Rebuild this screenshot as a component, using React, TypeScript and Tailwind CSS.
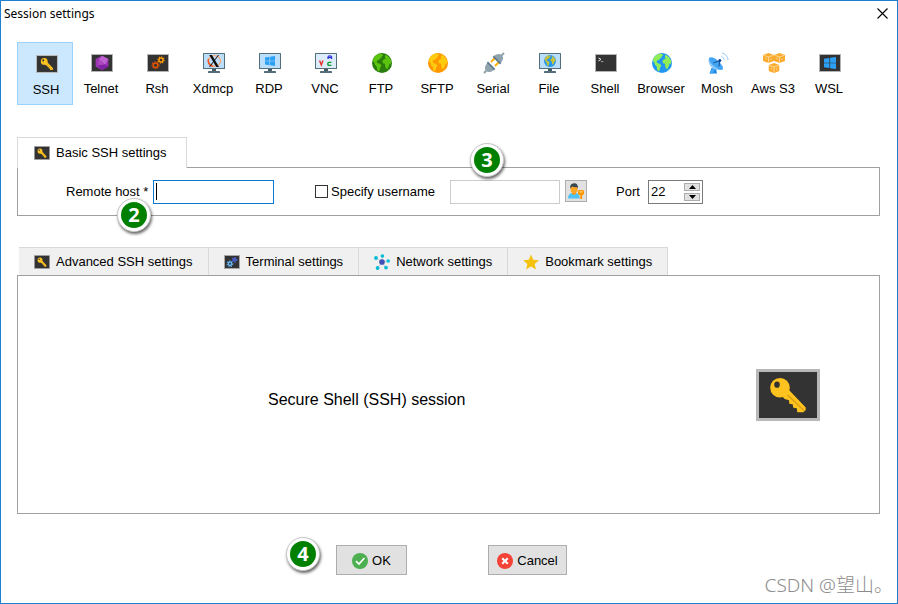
import { useState, useCallback } from 'react';
import type { ReactNode } from 'react';

/* ---------- icons ---------- */

const KeyIcon = ({ className }: { className?: string }) => (
  <svg viewBox="0 0 64 52" preserveAspectRatio="none" className={className}>
    <rect width="64" height="52" fill="#b8b8b8" />
    <rect x="3" y="3" width="58" height="46" fill="#333333" />
    <path
      d="M33 21 L49.7 38.5 V41 L47.3 43.3 H41.3 L40.8 39.3 L37.3 38.7 L36.7 35.3 L33.3 34.7 L33 31.3 L28.7 30 L26 27 Z"
      fill="#ffc31f"
    />
    <circle cx="24" cy="18.7" r="9.8" fill="#ffc31f" />
    <path d="M31.5 26 L48 41.5" stroke="#dba012" strokeWidth="1.6" />
    <ellipse cx="21" cy="15.7" rx="2.8" ry="3.1" fill="#333333" />
  </svg>
);

const DarkBox = ({ children }: { children: ReactNode }) => (
  <svg viewBox="0 0 22 18" className="h-[18px] w-[22px]">
    <rect width="22" height="18" fill="#b4b4b4" />
    <rect x="1" y="1" width="20" height="16" fill="#333333" />
    {children}
  </svg>
);

const Monitor = ({ children }: { children: ReactNode }) => (
  <svg viewBox="0 0 22 20" className="h-5 w-[22px]">
    <rect width="22" height="16" rx="0.5" fill="#546e7a" />
    <rect x="1" y="1" width="20" height="14" fill="#bbdefb" />
    <rect x="9" y="16" width="4" height="2" fill="#455a64" />
    <rect x="5" y="18" width="12" height="2" rx="0.5" fill="#546e7a" />
    {children}
  </svg>
);

const Gear = ({ cx, cy, r, color }: { cx: number; cy: number; r: number; color: string }) => (
  <g stroke={color} fill="none">
    <circle cx={cx} cy={cy} r={r} strokeWidth="1.5" />
    <circle cx={cx} cy={cy} r={r + 1.1} strokeWidth="1.1" strokeDasharray="1.2 1.2" />
  </g>
);

const GlobeShape = ({ sea, land }: { sea: string; land: string }) => (
  <>
    <circle cx="10" cy="10" r="10" fill={sea} />
    <path
      d="M3.2 3 C4.5 1.7 6 0.9 7.6 0.4 L10.6 1.2 L11 2.6 L9.4 3.4 L9.8 4.8 L8.2 5.2 L7 7 L5.4 7.2 L4.6 9 L6 10.2 L8.2 11 L9.4 12.8 L8.2 14.6 L7.6 17 L6.6 18.6 L5.2 17 L4.8 13.8 L3 11.8 L2.2 9.2 L0.8 8 C1 6.2 1.8 4.4 3.2 3 Z"
      fill={land}
    />
    <path
      d="M13.4 1.8 C16.4 3 18.8 5.8 19.4 9 L18.6 11.2 L17.4 10.4 L17 12.8 L15.6 15.4 L14 15.8 L13.2 13.2 L13 10.8 L11 10.2 L10.4 8 L12 6.2 L13.8 5.8 L12.8 4.2 Z"
      fill={land}
    />
    <path d="M15.4 17 L17.4 15.4 L16.4 17.4 Z" fill={land} />
  </>
);

const Globe = ({ sea, land }: { sea: string; land: string }) => (
  <svg viewBox="0 0 20 20" className="h-5 w-5">
    <GlobeShape sea={sea} land={land} />
  </svg>
);

const WindowsLogo = ({ x, y, size }: { x: number; y: number; size: number }) => (
  <svg x={x} y={y} width={size} height={size} viewBox="0 0 10 10">
    <path
      d="M0 1.4 L4.5 0.8 V4.7 H0 Z M5.1 0.7 L10 0 V4.7 H5.1 Z M0 5.3 H4.5 V9.2 L0 8.6 Z M5.1 5.3 H10 V10 L5.1 9.3 Z"
      fill="#2ba0f5"
    />
  </svg>
);

const TelnetIcon = () => (
  <DarkBox>
    <path d="M11 1.8 L17.4 5 V12.4 L11 16.2 L4.6 12.4 V5 Z" fill="#9c34b4" />
    <path d="M11 1.8 L17.4 5 L14 10.6 L8 5.4 Z" fill="#bd62d0" />
    <path d="M8 5.4 L14 10.6 L6.6 11.6 Z" fill="#ab47bc" />
    <path d="M14 10.6 L17.4 12.4 L11 16.2 L6.6 11.6 Z" fill="#7f22a4" />
  </DarkBox>
);

const RshIcon = () => (
  <DarkBox>
    <Gear cx={8.5} cy={11.3} r={2.3} color="#e65100" />
    <Gear cx={14} cy={6} r={2} color="#ff9800" />
  </DarkBox>
);

const XdmcpIcon = () => (
  <Monitor>
    <ellipse cx="11.4" cy="8" rx="6.2" ry="5.4" fill="none" stroke="#ffab70" strokeWidth="1.3" />
    <path d="M5.6 6 A6 5.4 0 0 0 10 13.2" fill="none" stroke="#f4511e" strokeWidth="1.6" />
    <path d="M6.2 2 H9 L16 14 H13.2 Z" fill="#111111" />
    <path d="M15 2 H16 L7 14 H6 Z" fill="#111111" />
  </Monitor>
);

const RdpIcon = () => (
  <Monitor>
    <WindowsLogo x={6} y={3} size={10} />
  </Monitor>
);

const VncIcon = () => (
  <Monitor>
    <rect x="1" y="1" width="20" height="14" fill="#dcecfa" />
    <path d="M4.6 7.6 L6.3 12 L8 7.6" fill="none" stroke="#e53935" strokeWidth="1.5" />
    <path d="M13 6 V4 Q13 2.8 14.8 2.8 Q16.6 2.8 16.6 4 V6 M13 4.7 H16.6" fill="none" stroke="#3030d8" strokeWidth="1.2" />
    <path d="M16.4 9.4 H14 Q12.8 9.4 12.8 10.9 Q12.8 12.4 14 12.4 H16.4" fill="none" stroke="#0a9a28" strokeWidth="1.4" />
  </Monitor>
);

const SerialIcon = () => (
  <svg viewBox="0 0 22 22" className="h-[22px] w-[22px]">
    <path d="M1 21 L5 17" stroke="#90a4ae" strokeWidth="2" />
    <path d="M21 1 L17 5" stroke="#90a4ae" strokeWidth="2" />
    <path d="M8 10 L12 6 M12 14 L16 10" stroke="#ffb300" strokeWidth="2" />
    <path d="M4 11.2 L10.8 18 L8.6 19.4 Q5.4 21 3.2 18.8 Q1 16.4 2.6 13.4 Z" fill="#90a4ae" />
    <path d="M5 9.6 L12.4 17 L11 18.4 L3.6 11 Z" fill="#607d8b" />
    <path d="M11 3.8 L18 10.8 L19.4 8.6 Q21 5.4 18.8 3.2 Q16.4 1 13.4 2.6 Z" fill="#90a4ae" />
    <path d="M11 3.6 L18.4 11 L17 12.4 L9.6 5 Z" fill="#607d8b" />
  </svg>
);

const FileIcon = () => (
  <Monitor>
    <svg x="5" y="2" width="12" height="12" viewBox="0 0 20 20">
      <GlobeShape sea="#2196f3" land="#c6c23c" />
    </svg>
  </Monitor>
);

const ShellIcon = () => (
  <DarkBox>
    <path d="M3.4 3.8 L6 5.4 L3.4 7" fill="none" stroke="#e8e8e8" strokeWidth="1" />
    <path d="M6 7.6 H8.4" stroke="#bdbdbd" strokeWidth="0.8" />
  </DarkBox>
);

const MoshIcon = () => (
  <svg viewBox="0 0 22 22" className="h-[22px] w-[22px]">
    <path d="M4.5 16 L9 16.6 L10 21.6 H2.6 Z" fill="#1e88e5" />
    <path d="M5 16 L8 16.6 L6 21.6 H2.6 Z" fill="#42a5f5" />
    <path d="M2.2 5.6 Q0.4 9.6 3.6 14.2 Q8.6 19.6 16 17.4 Z" fill="#90caf9" />
    <ellipse cx="9" cy="11.5" rx="8.8" ry="3.4" transform="rotate(41 9 11.5)" fill="#42a5f5" />
    <path d="M6.4 10.8 L12.6 8.8 L12 14.4" fill="none" stroke="#174d8c" strokeWidth="1" />
    <circle cx="12.8" cy="8.4" r="1.5" fill="#0d47a1" />
    <path d="M14.4 4.6 Q16.8 5.4 17.4 8 M15 1 Q20 2.2 21.2 8" fill="none" stroke="#90caf9" strokeWidth="1" />
  </svg>
);

const Cube = ({ x, y }: { x: number; y: number }) => (
  <svg x={x} y={y} width="11" height="10" viewBox="0 0 11 10">
    <path d="M5.5 0 L11 2 V8 L5.5 10 L0 8 V2 Z" fill="#fbac2f" />
    <path d="M0.6 2.3 L5.5 4 L10.4 2.3 M5.5 4 V9.4" fill="none" stroke="#ffe2ae" strokeWidth="0.8" />
    <path d="M2.4 5.4 L3.6 5.8 M8 5.6 V7" fill="none" stroke="#fff0d0" strokeWidth="0.7" />
  </svg>
);

const AwsIcon = () => (
  <svg viewBox="0 0 22 20" className="h-5 w-[22px]">
    <Cube x={0} y={0} />
    <Cube x={11} y={0} />
    <Cube x={5.5} y={10} />
  </svg>
);

const WslIcon = () => (
  <DarkBox>
    <WindowsLogo x={5} y={3} size={12} />
  </DarkBox>
);

const TerminalIcon = () => (
  <svg viewBox="0 0 16 14" className="h-3.5 w-4">
    <rect width="16" height="14" fill="#a8a8a8" />
    <rect x="1" y="1" width="14" height="12" fill="#333333" />
    <Gear cx={6} cy={8.8} r={1.7} color="#64b5f6" />
    <Gear cx={10.6} cy={4.8} r={1.2} color="#4a5fd0" />
  </svg>
);

const NetworkIcon = () => (
  <svg viewBox="0 0 16 16" className="h-4 w-4">
    <path d="M8 8 L8.4 2 M8 8 L2 4 M8 8 L14.4 7 M8 8 L12 13.8 M8 8 L3.6 14" stroke="#b8c4d8" strokeWidth="0.8" />
    <g fill="#00bcd4">
      <circle cx="8.4" cy="2" r="1.8" />
      <circle cx="2" cy="4" r="1.9" />
      <circle cx="14.2" cy="7" r="1.8" />
      <circle cx="12" cy="13.6" r="1.9" />
      <circle cx="3.6" cy="14" r="1.9" />
    </g>
    <circle cx="8" cy="8" r="2.8" fill="#3f51b5" />
  </svg>
);

const StarIcon = () => (
  <svg viewBox="0 0 16 16" className="h-4 w-4">
    <path d="M8 0.4 L10.2 5.7 L16 6.2 L11.6 10 L13 15.6 L8 12.5 L3 15.6 L4.4 10 L0 6.2 L5.8 5.7 Z" fill="#f4c20d" />
  </svg>
);

const UserKeyIcon = () => (
  <svg viewBox="0 0 18 18" className="h-[18px] w-[18px]">
    <path d="M1 16.6 Q1 11.2 5.4 11 H9 Q12.6 11.4 12.8 16.6 Z" fill="#4fc3f7" />
    <path d="M5 9.6 H9 V12 Q7 13.6 5 12 Z" fill="#f59a23" />
    <rect x="3.6" y="3" width="7" height="8" rx="3.2" fill="#ffa726" />
    <path d="M3.2 7 Q2.6 1.4 7 1.2 Q11.4 1 11 7 L10.2 5.2 Q7 5.6 5.4 4.6 L4 5.6 Z" fill="#37474f" />
    <rect x="11" y="8" width="6" height="5" rx="1.4" fill="#ff9800" />
    <path d="M13.2 12 H15.2 V17 H13.2 Z" fill="#ff9800" />
    <rect x="12.6" y="9.4" width="2.8" height="1" fill="#ffe0b2" />
  </svg>
);

const OkIcon = () => (
  <svg viewBox="0 0 16 16" className="h-4 w-4">
    <circle cx="8" cy="8" r="8" fill="#4caf50" />
    <path d="M4 8.2 L7 11 L12.4 5" fill="none" stroke="#ffffff" strokeWidth="1.7" />
  </svg>
);

const CancelIcon = () => (
  <svg viewBox="0 0 16 16" className="h-4 w-4">
    <circle cx="8" cy="8" r="8" fill="#f44336" />
    <path d="M5.2 5.2 L10.8 10.8 M10.8 5.2 L5.2 10.8" stroke="#ffffff" strokeWidth="2" />
  </svg>
);

/* ---------- data ---------- */

const SESSION_TYPES: { name: string; icon: ReactNode }[] = [
  { name: 'SSH', icon: <KeyIcon className="h-[18px] w-[22px]" /> },
  { name: 'Telnet', icon: <TelnetIcon /> },
  { name: 'Rsh', icon: <RshIcon /> },
  { name: 'Xdmcp', icon: <XdmcpIcon /> },
  { name: 'RDP', icon: <RdpIcon /> },
  { name: 'VNC', icon: <VncIcon /> },
  { name: 'FTP', icon: <Globe sea="#2a7d0c" land="#5bc40f" /> },
  { name: 'SFTP', icon: <Globe sea="#ff9800" land="#ffcb0f" /> },
  { name: 'Serial', icon: <SerialIcon /> },
  { name: 'File', icon: <FileIcon /> },
  { name: 'Shell', icon: <ShellIcon /> },
  { name: 'Browser', icon: <Globe sea="#2196f3" land="#8fee58" /> },
  { name: 'Mosh', icon: <MoshIcon /> },
  { name: 'Aws S3', icon: <AwsIcon /> },
  { name: 'WSL', icon: <WslIcon /> },
];

const SETTINGS_TABS: { name: string; icon: ReactNode }[] = [
  { name: 'Advanced SSH settings', icon: <KeyIcon className="h-3.5 w-4" /> },
  { name: 'Terminal settings', icon: <TerminalIcon /> },
  { name: 'Network settings', icon: <NetworkIcon /> },
  { name: 'Bookmark settings', icon: <StarIcon /> },
];

const StepBadge = ({ step }: { step: number }) => (
  <span className="flex size-[34px] items-center justify-center rounded-full border border-[#c8c8c8] bg-white shadow-[1px_2px_3px_rgba(0,0,0,0.6)]">
    <span className="flex size-[26px] items-center justify-center rounded-full bg-[#008000] font-['Open_Sans','Noto_Sans',sans-serif] text-xl leading-none font-bold text-white">
      {step}
    </span>
  </span>
);

const App = () => {
  const [session, setSession] = useState('SSH');
  const [host, setHost] = useState('');
  const [useName, setUseName] = useState(false);
  const [username, setUsername] = useState('');
  const [port, setPort] = useState(22);

  const stepPort = useCallback((delta: number) => {
    setPort((prev) => Math.min(65535, Math.max(1, prev + delta)));
  }, []);

  return (
    <div className="relative flex min-h-screen flex-col border border-[#1c7fcf] bg-white font-['Liberation_Sans',Arial,sans-serif] text-[13px] leading-5 text-black">
      <header className="flex h-[25px] items-center justify-between pr-2 pl-[3px]">
        <h1 className="font-['Noto_Sans',sans-serif] text-xs">Session settings</h1>
        <button type="button" aria-label="Close" className="p-px">
          <svg viewBox="0 0 11 11" className="size-[11px]">
            <path d="M0.5 0.5 L10.5 10.5 M10.5 0.5 L0.5 10.5" stroke="#000000" strokeWidth="1.1" />
          </svg>
        </button>
      </header>

      <main className="flex flex-1 flex-col pt-4 pr-[17px] pb-7 pl-4">
        {/* session types */}
        <nav className="flex h-[63px]">
          {SESSION_TYPES.map(({ name, icon }) => (
            <button
              key={name}
              type="button"
              aria-pressed={session === name}
              onClick={() => setSession(name)}
              className={
                session === name
                  ? 'flex w-14 flex-col items-center gap-1.5 border border-[#99d1ff] bg-[#cce8ff] pt-[11px] pl-0.5'
                  : 'flex w-14 flex-col items-center gap-1.5 pt-[11px]'
              }
            >
              <span className="flex h-5 items-center pl-0.5">{icon}</span>
              <span className="whitespace-nowrap">{name}</span>
            </button>
          ))}
        </nav>

        {/* basic settings */}
        <section className="mt-8">
          <div role="tablist" className="relative -mb-px flex">
            <button
              type="button"
              role="tab"
              aria-selected="true"
              className="flex h-[31px] items-center gap-1.5 border border-b-0 border-[#d9d9d9] bg-white pr-[19px] pl-4"
            >
              <KeyIcon className="h-3.5 w-4" />
              Basic SSH settings
            </button>
          </div>
          <div className="flex items-start border border-[#a0a0a0] pt-3 pb-[11px] pl-12">
            <div className="relative flex">
              <label htmlFor="host" className="w-[87px] leading-6">
                Remote host *
              </label>
              <input
                id="host"
                value={host}
                onChange={(e) => setHost(e.target.value)}
                className="h-6 w-[121px] border border-[#0f78d0] px-1 outline-none"
              />
              {!host && <span className="absolute top-[3px] left-[90px] h-[17px] w-px bg-black" />}
              <span className="absolute top-[18px] left-[51px]">
                <StepBadge step={2} />
              </span>
            </div>

            <div className="relative ml-[41px] flex">
              <div className="flex w-[135px] items-center gap-[3px]">
                <input
                  id="use-name"
                  type="checkbox"
                  checked={useName}
                  onChange={(e) => setUseName(e.target.checked)}
                  className="mb-px size-[13px] appearance-none border border-[#333333] bg-white checked:bg-[#333333]"
                />
                <label htmlFor="use-name" className="leading-6 whitespace-nowrap">
                  Specify username
                </label>
              </div>
              <input
                aria-label="Username"
                value={username}
                onChange={(e) => setUsername(e.target.value)}
                className="h-6 w-[110px] border border-[#cccccc] px-1 outline-none"
              />
              <button
                type="button"
                aria-label="Manage users"
                className="ml-[5px] flex size-[22px] items-center justify-center border border-[#adadad] bg-[#e1e1e1]"
              >
                <UserKeyIcon />
              </button>
              <span className="absolute -top-[37px] left-[155px]">
                <StepBadge step={3} />
              </span>
            </div>

            <div className="ml-[29px] flex">
              <label htmlFor="port" className="w-8 leading-6">
                Port
              </label>
              <div className="flex h-6 w-[55px] items-center justify-between border border-[#7a7a7a] px-0.5">
                <input
                  id="port"
                  inputMode="numeric"
                  value={port}
                  onChange={(e) => setPort(Number(e.target.value) || 0)}
                  className="w-8 outline-none"
                />
                <div className="flex flex-col gap-0.5">
                  <button
                    type="button"
                    aria-label="Increase port"
                    onClick={() => stepPort(1)}
                    className="flex h-2 w-4 items-center justify-center border border-[#adadad] bg-[#e1e1e1]"
                  >
                    <svg viewBox="0 0 7 4" className="h-1 w-[7px]">
                      <path d="M3.5 0 L7 4 H0 Z" />
                    </svg>
                  </button>
                  <button
                    type="button"
                    aria-label="Decrease port"
                    onClick={() => stepPort(-1)}
                    className="flex h-2 w-4 items-center justify-center border border-[#adadad] bg-[#e1e1e1]"
                  >
                    <svg viewBox="0 0 7 4" className="h-1 w-[7px]">
                      <path d="M0 0 H7 L3.5 4 Z" />
                    </svg>
                  </button>
                </div>
              </div>
            </div>
          </div>
        </section>

        {/* extra settings */}
        <section className="mt-[31px] flex flex-1 flex-col">
          <div role="tablist" className="ml-0.5 flex">
            {SETTINGS_TABS.map(({ name, icon }) => (
              <button
                key={name}
                type="button"
                role="tab"
                aria-selected="false"
                className="flex h-7 items-center gap-1.5 border-t border-r border-[#d9d9d9] bg-[#f0f0f0] pt-px pr-[15px] pl-[15px]"
              >
                {icon}
                {name}
              </button>
            ))}
          </div>
          <div className="flex flex-1 items-center justify-between border border-[#a0a0a0] pr-[59px] pl-[250px]">
            <p className="pt-2.5 text-base leading-6">Secure Shell (SSH) session</p>
            <KeyIcon className="h-[52px] w-16" />
          </div>
        </section>

        <footer className="mt-[31px] flex h-[30px] pl-[269px]">
          <span className="-mt-2">
            <StepBadge step={4} />
          </span>
          <button
            type="button"
            className="ml-4 flex h-[30px] w-[71px] items-center justify-center gap-1 border border-[#adadad] bg-[#e1e1e1] pt-px"
          >
            <OkIcon />
            OK
          </button>
          <button
            type="button"
            className="ml-[81px] flex h-[30px] w-[79px] items-center justify-center gap-1 border border-[#adadad] bg-[#e1e1e1] pt-px"
          >
            <CancelIcon />
            Cancel
          </button>
        </footer>
      </main>

      <span className="absolute right-1 bottom-1 font-['Noto_Sans','Noto_Sans_CJK_SC',sans-serif] text-[19px] leading-7 font-light text-[#8c8c8c]">
        CSDN @望山。
      </span>
    </div>
  );
};

export default App;
